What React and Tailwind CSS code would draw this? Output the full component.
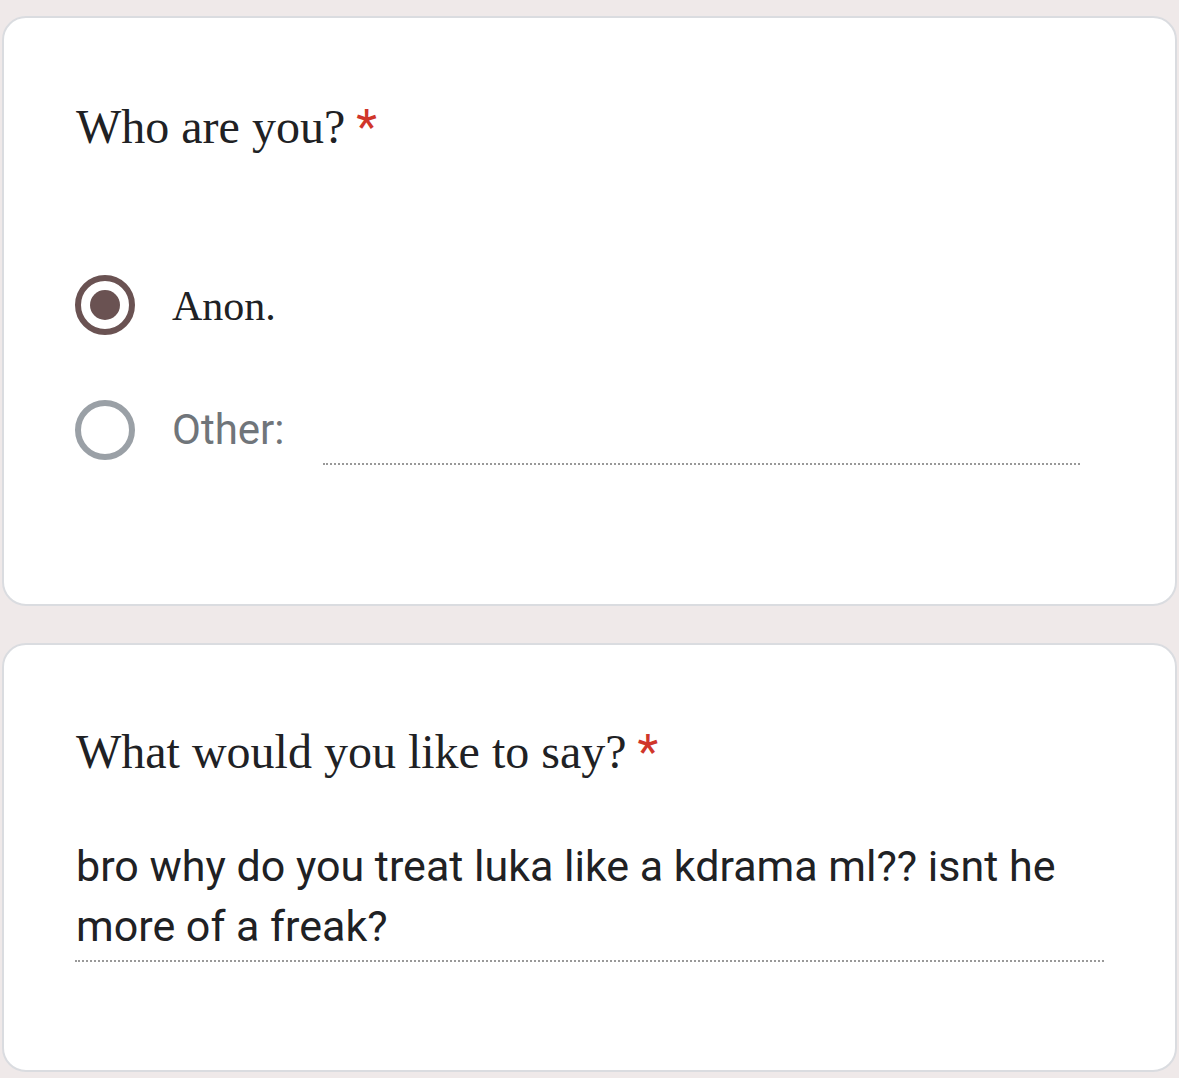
import { useState } from 'react'

const serif = { fontFamily: '"Liberation Serif", "Times New Roman", serif' }
const sans = { fontFamily: 'Roboto, "Noto Sans", sans-serif' }

function Radio({ checked }) {
  return (
    <div
      className={`flex h-[60px] w-[60px] shrink-0 items-center justify-center rounded-full border-[6px] ${
        checked ? 'border-[#6a5252]' : 'border-[#9aa0a6]'
      }`}
    >
      {checked ? <div className="h-[30px] w-[30px] rounded-full bg-[#6a5252]" /> : null}
    </div>
  )
}

function Title({ children }) {
  return (
    <h2 className="pl-[1px] text-[48px] leading-[56px] font-normal text-[#202124]" style={serif}>
      {children}
      <span className="ml-[11px] text-[#d0362a]" style={sans}>
        *
      </span>
    </h2>
  )
}

export default function App() {
  const [choice] = useState('anon')

  return (
    <div className="min-h-[1078px] bg-[#efe9e9] px-[2px] pt-[16px]">
      <section className="rounded-[24px] border-2 border-[#dadce0] bg-white pt-[81px] pb-[144px] pl-[71px] pr-[95px]">
        <Title>Who are you?</Title>

        <div className="mt-[120px] flex flex-col gap-[65px]">
          <div className="flex h-[60px] items-center gap-[37px]">
            <Radio checked={choice === 'anon'} />
            <span className="pt-[2px] text-[42px] leading-[60px] text-[#202124]" style={serif}>
              Anon.
            </span>
          </div>

          <div className="flex h-[60px] items-center gap-[37px]">
            <Radio checked={choice === 'other'} />
            <span className="text-[42px] leading-[60px] text-[#70757a]" style={sans}>
              Other:
            </span>
            <div className="ml-[2px] h-[70px] flex-1 border-b-2 border-dotted border-[#999999]" />
          </div>
        </div>
      </section>

      <section className="mt-[37px] rounded-[24px] border-2 border-[#dadce0] bg-white pt-[79px] pb-[108px] pl-[71px] pr-[71px]">
        <Title>What would you like to say?</Title>

        <div className="mt-[56px] border-b-2 border-dotted border-[#999999] pb-[4px]">
          <p className="pl-[1px] text-[43px] leading-[60px] text-[#202124]" style={sans}>
            bro why do you treat luka like a kdrama ml?? isnt he more of a freak?
          </p>
        </div>
      </section>
    </div>
  )
}
